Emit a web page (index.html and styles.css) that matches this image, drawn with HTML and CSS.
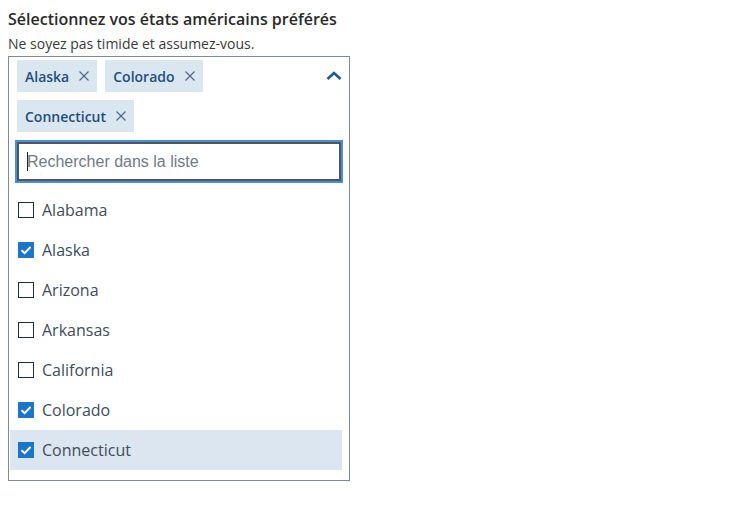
FILE: index.html
```html
<!DOCTYPE html>
<html lang="fr">
<head>
<meta charset="utf-8">
<title>Sélection d'états</title>
<link rel="stylesheet" href="styles.css">
</head>
<body>
<div class="field">
  <div class="label">Sélectionnez vos états américains préférés</div>
  <div class="hint">Ne soyez pas timide et assumez-vous.</div>
  <div class="combo">
    <div class="head">
      <div class="tags">
        <span class="tag">Alaska<svg class="x" width="10" height="10" viewBox="0 0 10 10"><path d="M0.5 0.5L9.5 9.5M9.5 0.5L0.5 9.5"/></svg></span>
        <span class="tag">Colorado<svg class="x" width="10" height="10" viewBox="0 0 10 10"><path d="M0.5 0.5L9.5 9.5M9.5 0.5L0.5 9.5"/></svg></span>
        <span class="tag">Connecticut<svg class="x" width="10" height="10" viewBox="0 0 10 10"><path d="M0.5 0.5L9.5 9.5M9.5 0.5L0.5 9.5"/></svg></span>
      </div>
      <svg class="chev" width="16" height="10" viewBox="0 0 16 10"><path d="M1.5 8L8 2L14.5 8"/></svg>
    </div>
    <div class="search"><span class="caret"></span><span class="ph">Rechercher dans la liste</span></div>
    <ul class="list">
      <li class="opt"><span class="cb"></span>Alabama</li>
      <li class="opt"><span class="cb on"><svg width="16" height="16" viewBox="0 0 16 16"><path d="M3.5 8.2L6.6 11.2L12.5 5"/></svg></span>Alaska</li>
      <li class="opt"><span class="cb"></span>Arizona</li>
      <li class="opt"><span class="cb"></span>Arkansas</li>
      <li class="opt"><span class="cb"></span>California</li>
      <li class="opt"><span class="cb on"><svg width="16" height="16" viewBox="0 0 16 16"><path d="M3.5 8.2L6.6 11.2L12.5 5"/></svg></span>Colorado</li>
      <li class="opt active"><span class="cb on"><svg width="16" height="16" viewBox="0 0 16 16"><path d="M3.5 8.2L6.6 11.2L12.5 5"/></svg></span>Connecticut</li>
    </ul>
  </div>
</div>
</body>
</html>
```
FILE: styles.css
```css
html, body {
  margin: 0;
  padding: 0;
  background: #ffffff;
}
body {
  padding: 8px;
  font-family: "Open Sans", "Noto Sans", sans-serif;
}
.label {
  font-size: 16px;
  line-height: 22px;
  font-weight: 600;
  color: #2a2a2a;
}
.hint {
  font-size: 14px;
  line-height: 20px;
  color: #3a3a3a;
  margin: 4px 0 2px;
}
.combo {
  width: 340px;
  border: 1px solid #7f8a99;
  padding: 3px 0 10px;
}
.head {
  display: flex;
  align-items: flex-start;
  padding: 0 7px 0 8px;
}
.tags {
  flex: 1;
  display: flex;
  flex-wrap: wrap;
  gap: 8px;
}
.tag {
  display: inline-flex;
  align-items: center;
  height: 32px;
  padding: 0 8px 0 8px;
  background: #dae6f0;
  color: #1f4f7e;
  font-size: 14px;
  font-weight: 600;
}
.x {
  margin-left: 10px;
  fill: none;
  stroke: #4e6a86;
  stroke-width: 1.2;
}
.chev {
  margin-top: 11px;
  fill: none;
  stroke: #1b5a96;
  stroke-width: 2.6;
}
.search {
  margin: 10px 8px 9px;
  height: 39px;
  box-sizing: border-box;
  border: 2px solid #4d5663;
  outline: 2px solid #4a8fd6;
  display: flex;
  align-items: center;
  padding-left: 8px;
  font-family: "Liberation Sans", Arial, sans-serif;
  font-size: 16px;
  color: #6f7a86;
}
.caret {
  width: 1px;
  height: 19px;
  background: #222;
  margin-right: -1px;
}
.list {
  list-style: none;
  margin: 0 7px 0 1px;
  padding: 0;
}
.opt {
  display: flex;
  align-items: center;
  height: 40px;
  padding-left: 8px;
  gap: 8px;
  font-size: 16px;
  color: #404d5c;
}
.opt.active {
  background: #dbe6f0;
}
.cb {
  width: 16px;
  height: 16px;
  box-sizing: border-box;
  border: 1.5px solid #1f2f42;
  background: #fff;
  display: inline-block;
}
.cb.on {
  border: none;
  background: #1b75c9;
}
.cb svg {
  display: block;
  fill: none;
  stroke: #ffffff;
  stroke-width: 2;
}
```
